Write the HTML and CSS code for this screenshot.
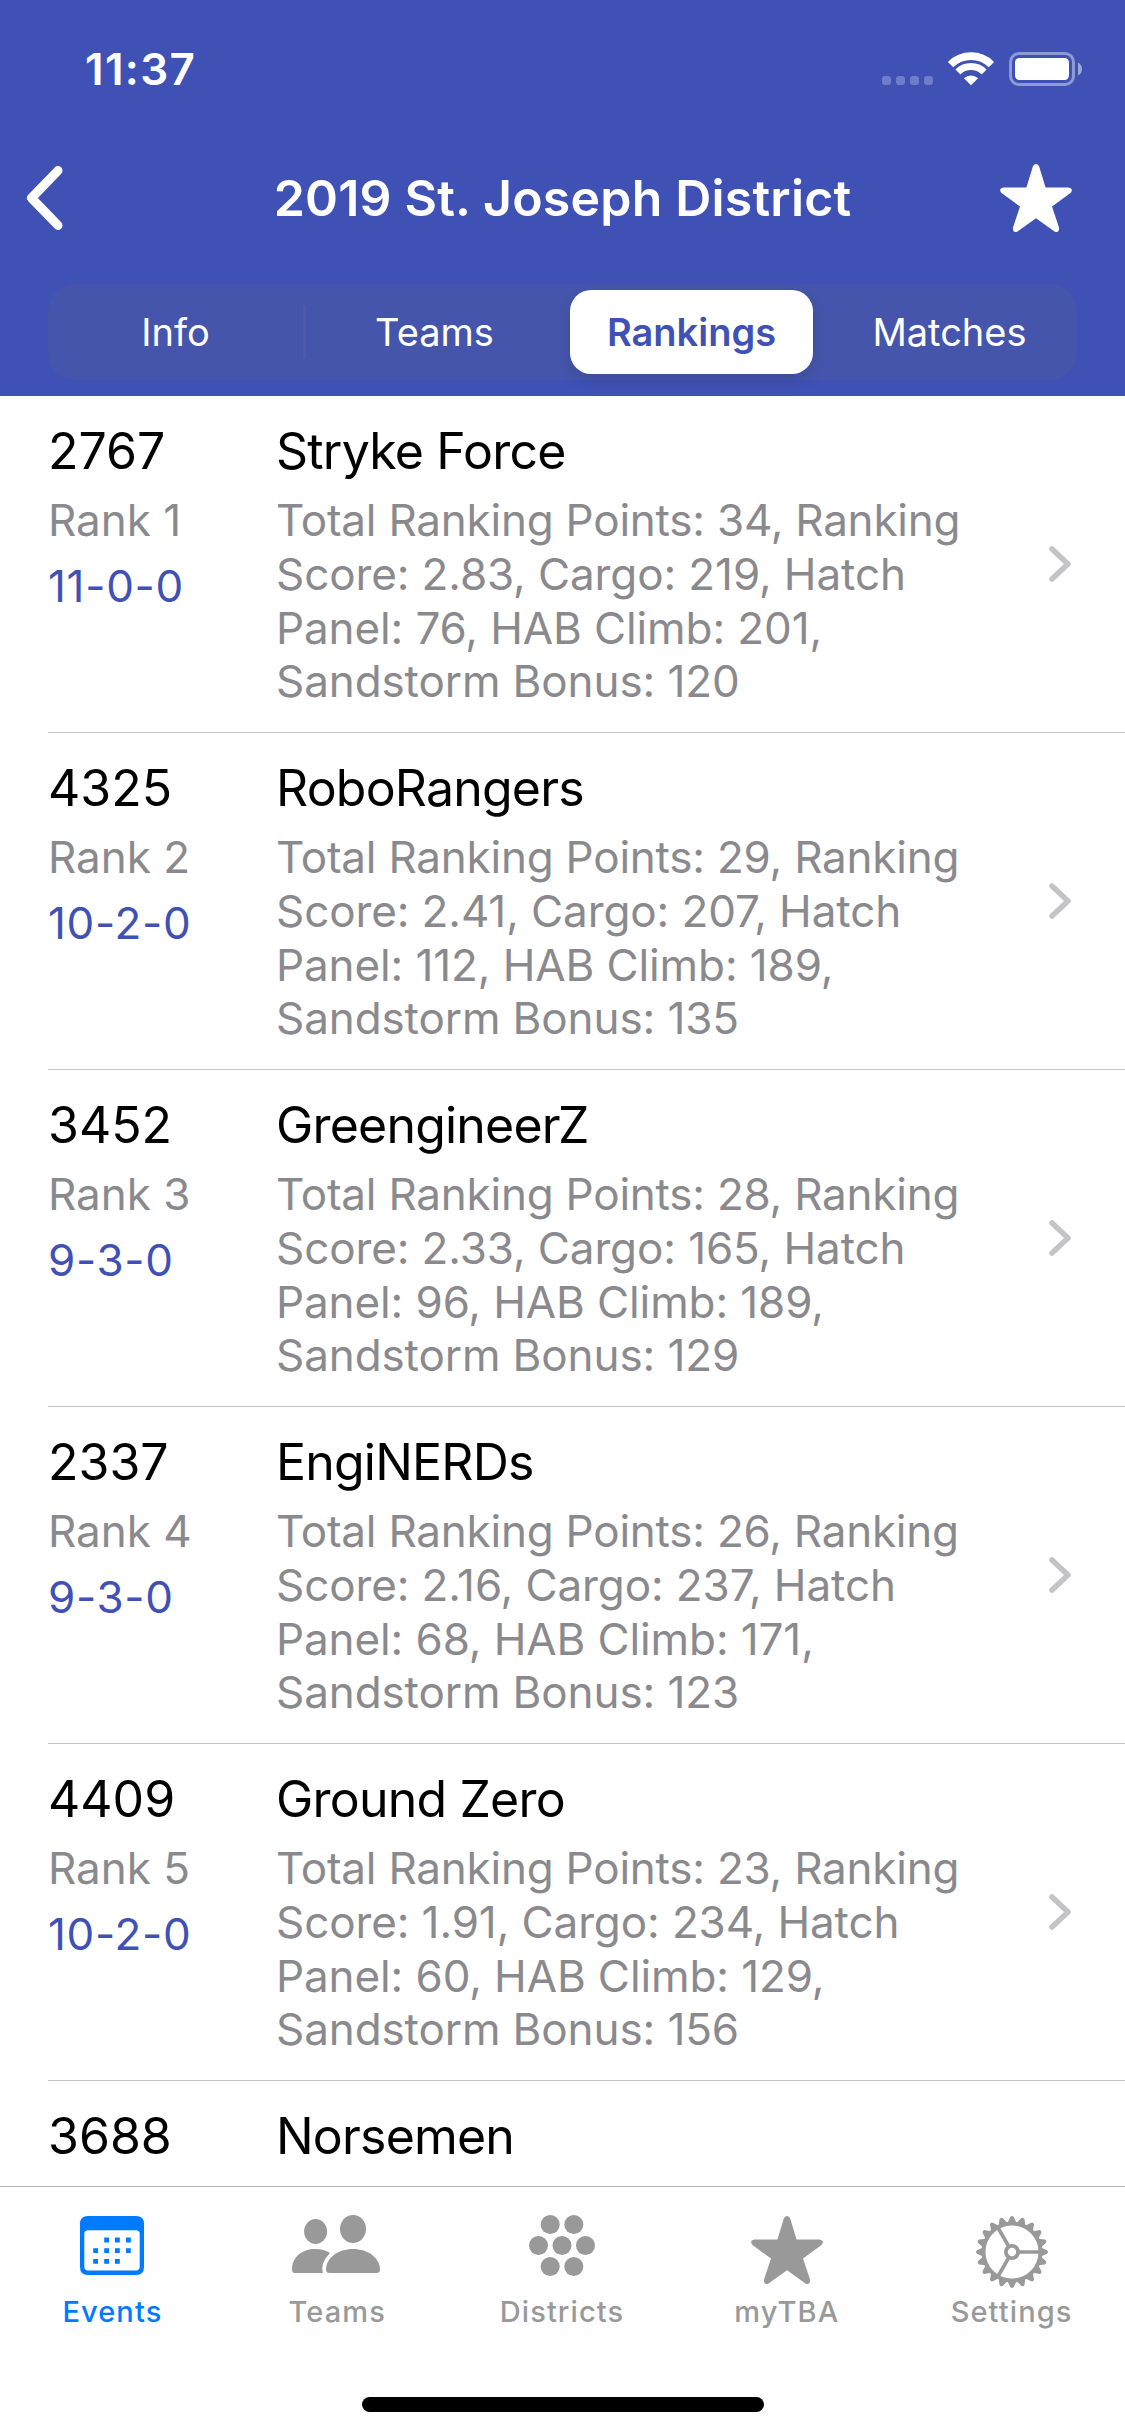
FILE: index.html
```
<!DOCTYPE html>
<html lang="en">
<head>
<meta charset="utf-8">
<title>2019 St. Joseph District</title>
<link rel="stylesheet" href="styles.css">
</head>
<body>
<div class="app">
  <header class="header">
    <div class="status">
      <span class="time">11:37</span>
      <svg class="status-icons" width="204" height="40" viewBox="880 50 204 40" aria-hidden="true">
        <g fill="#fff" fill-opacity=".25">
          <rect x="882" y="76" width="9" height="9" rx="3"/><rect x="896" y="76" width="9" height="9" rx="3"/><rect x="910" y="76" width="9" height="9" rx="3"/><rect x="924" y="76" width="9" height="9" rx="3"/>
        </g>
        <g fill="none" stroke="#fff">
          <path stroke-width="7.6" d="M950.6 64.6A28.9 28.9 0 0 1 991.4 64.6"/>
          <path stroke-width="7" d="M957.9 71.9A18.6 18.6 0 0 1 984.1 71.9"/>
        </g>
        <path fill="#fff" d="M971 85.2L963.9 78.3A10.2 10.2 0 0 1 978.1 78.3Z"/>
        <rect x="1010.5" y="53.5" width="63" height="31" rx="8.5" fill="none" stroke="#fff" stroke-opacity=".42" stroke-width="3"/>
        <rect x="1015" y="58" width="54" height="22" rx="4.5" fill="#fff"/>
        <path fill="#fff" fill-opacity=".5" d="M1078 62.5Q1082 64.500 1082 69T1078 75.500Z"/>
      </svg>
    </div>
    <div class="navbar">
      <svg class="back" width="37" height="64" viewBox="0 0 37 64" aria-hidden="true"><path d="M32 4.600L5.500 32L32 59.400" fill="none" stroke="#fff" stroke-width="9" stroke-linecap="round" stroke-linejoin="round"/></svg>
      <h1 class="title">2019 St. Joseph District</h1>
      <svg class="favorite" width="72" height="68" viewBox="0 0 72 68" aria-hidden="true"><path id="star" fill="currentColor" d="M33 2Q36-2 39 2L45.600 23.500H68.500Q74 24.800 70.500 29L52 42.500L59 63.500Q59.500 69.500 54.500 67.500L36 54.300L17.500 67.500Q12.500 69.500 13 63.500L20 42.500L1.500 29Q-2 24.800 3.500 23.500H26.400Z"/></svg>
    </div>
    <nav class="segments">
      <span class="segment divided">Info</span>
      <span class="segment">Teams</span>
      <span class="segment selected">Rankings</span>
      <span class="segment last">Matches</span>
    </nav>
  </header>

  <main class="list">
    <article class="row">
      <div class="team"><div class="number">2767</div><div class="rank">Rank 1</div><div class="record">11-0-0</div></div>
      <div class="info"><div class="name">Stryke Force</div><p class="detail">Total Ranking Points: 34, Ranking<br>Score: 2.83, Cargo: 219, Hatch<br>Panel: 76, HAB Climb: 201,<br>Sandstorm Bonus: 120</p></div>
      <svg class="chevron" width="24" height="38" viewBox="0 0 24 38" aria-hidden="true"><path id="disclosure" d="M4 4L20 19L4 34" fill="none" stroke="#c4c4c7" stroke-width="5.500" stroke-linecap="round" stroke-linejoin="round"/></svg>
    </article>
    <article class="row">
      <div class="team"><div class="number">4325</div><div class="rank">Rank 2</div><div class="record">10-2-0</div></div>
      <div class="info"><div class="name">RoboRangers</div><p class="detail">Total Ranking Points: 29, Ranking<br>Score: 2.41, Cargo: 207, Hatch<br>Panel: 112, HAB Climb: 189,<br>Sandstorm Bonus: 135</p></div>
      <svg class="chevron" width="24" height="38" viewBox="0 0 24 38" aria-hidden="true"><use href="#disclosure"/></svg>
    </article>
    <article class="row">
      <div class="team"><div class="number">3452</div><div class="rank">Rank 3</div><div class="record">9-3-0</div></div>
      <div class="info"><div class="name">GreengineerZ</div><p class="detail">Total Ranking Points: 28, Ranking<br>Score: 2.33, Cargo: 165, Hatch<br>Panel: 96, HAB Climb: 189,<br>Sandstorm Bonus: 129</p></div>
      <svg class="chevron" width="24" height="38" viewBox="0 0 24 38" aria-hidden="true"><use href="#disclosure"/></svg>
    </article>
    <article class="row">
      <div class="team"><div class="number">2337</div><div class="rank">Rank 4</div><div class="record">9-3-0</div></div>
      <div class="info"><div class="name">EngiNERDs</div><p class="detail">Total Ranking Points: 26, Ranking<br>Score: 2.16, Cargo: 237, Hatch<br>Panel: 68, HAB Climb: 171,<br>Sandstorm Bonus: 123</p></div>
      <svg class="chevron" width="24" height="38" viewBox="0 0 24 38" aria-hidden="true"><use href="#disclosure"/></svg>
    </article>
    <article class="row">
      <div class="team"><div class="number">4409</div><div class="rank">Rank 5</div><div class="record">10-2-0</div></div>
      <div class="info"><div class="name">Ground Zero</div><p class="detail">Total Ranking Points: 23, Ranking<br>Score: 1.91, Cargo: 234, Hatch<br>Panel: 60, HAB Climb: 129,<br>Sandstorm Bonus: 156</p></div>
      <svg class="chevron" width="24" height="38" viewBox="0 0 24 38" aria-hidden="true"><use href="#disclosure"/></svg>
    </article>
    <article class="row">
      <div class="team"><div class="number">3688</div></div>
      <div class="info"><div class="name">Norsemen</div></div>
    </article>
  </main>

  <footer class="footer">
    <nav class="tabs">
      <div class="tab active">
        <svg class="tab-icon" width="90" height="74" viewBox="67 2215 90 74" aria-hidden="true">
          <path fill="currentColor" fill-rule="evenodd" d="M88 2216H136Q144 2216 144 2224V2267Q144 2275 136 2275H88Q80 2275 80 2267V2224Q80 2216 88 2216ZM88 2230.300Q84.300 2230.300 84.300 2234V2266.500Q84.300 2270.500 88 2270.500H136Q139.700 2270.500 139.700 2266.500V2234Q139.700 2230.300 136 2230.300Z"/>
          <path stroke="currentColor" stroke-width="4.800" d="M104.200 2240h4.800M115 2240h4.800M126 2240h4.800M93.200 2250.600h4.800M104.200 2250.600h4.800M115 2250.600h4.800M126 2250.600h4.800M93.200 2261.300h4.800M104.200 2261.300h4.800M115 2261.300h4.800"/>
        </svg>
        <span>Events</span>
      </div>
      <div class="tab">
        <svg class="tab-icon" width="90" height="74" viewBox="292 2215 90 74" aria-hidden="true">
          <g fill="currentColor">
            <ellipse cx="315.600" cy="2231.500" rx="11.500" ry="12.500"/>
            <ellipse cx="353" cy="2229" rx="13" ry="14"/>
            <path d="M295 2273Q292 2273 292 2269.500C292 2257 302 2249 315.500 2249Q324 2249 330 2253Q320 2263 322.800 2273Z"/>
            <path d="M330 2273Q326 2273 326 2269.500C326 2258 338 2249 353 2249S380 2258 380 2269.500Q380 2273 376.500 2273Z"/>
          </g>
        </svg>
        <span>Teams</span>
      </div>
      <div class="tab">
        <svg class="tab-icon" width="90" height="74" viewBox="517 2215 90 74" aria-hidden="true">
          <g fill="currentColor">
            <circle cx="550.200" cy="2224.500" r="9.500"/><circle cx="573.800" cy="2224.500" r="9.500"/>
            <circle cx="538.500" cy="2245.500" r="9.500"/><circle cx="562" cy="2245.500" r="9.500"/><circle cx="585.500" cy="2245.500" r="9.500"/>
            <circle cx="550.200" cy="2266.500" r="9.500"/><circle cx="573.800" cy="2266.500" r="9.500"/>
          </g>
        </svg>
        <span>Districts</span>
      </div>
      <div class="tab">
        <svg class="tab-icon" width="90" height="74" viewBox="-9 -1 90 74" aria-hidden="true"><use href="#star"/></svg>
        <span>myTBA</span>
      </div>
      <div class="tab">
        <svg class="tab-icon" width="90" height="74" viewBox="-45 -37 90 74" aria-hidden="true">
          <defs>
            <path id="teeth" d="M29.500-4.300L35-1.800Q37 0 35 1.800L29.500 4.300ZM-29.500-4.300L-35-1.800Q-37 0-35 1.800L-29.500 4.300ZM-4.300 29.500L-1.800 35Q0 37 1.800 35L4.300 29.500ZM-4.300-29.500L-1.800-35Q0-37 1.800-35L4.300-29.500Z"/>
          </defs>
          <!-- Four teeth per group; the wheel's first tooth sits on the horizontal spoke -->
          <g fill="currentColor" transform="rotate(9)">
            <use href="#teeth" transform="rotate(9)"/><use href="#teeth" transform="rotate(27)"/><use href="#teeth" transform="rotate(45)"/><use href="#teeth" transform="rotate(63)"/><use href="#teeth" transform="rotate(81)"/>
          </g>
          <g fill="none" stroke="currentColor" stroke-width="3.600">
            <circle r="28.500" stroke-width="4"/>
            <circle r="6.100" stroke-width="3.800"/>
            <path d="M7 0H28M-3.500-6.060L-14-24.250M-3.500 6.060L-14 24.250"/>
          </g>
        </svg>
        <span>Settings</span>
      </div>
    </nav>
    <div class="home-indicator"></div>
  </footer>
</div>
</body>
</html>
```
FILE: styles.css
```
* {
  box-sizing: border-box;
}

body {
  margin: 0;
  background: #fff;
  font-family: Inter, "Liberation Sans", sans-serif;
}

.app {
  display: flex;
  flex-direction: column;
  width: 1125px;
  height: 2436px;
  overflow: hidden;
}

.header {
  flex: none;
  height: 396px;
  background: #3f51b5;
  color: #fff;
}

.status {
  display: flex;
  justify-content: space-between;
  height: 132px;
  padding: 42px 41px 0 85px;
}

.time {
  font-size: 44px;
  line-height: 54px;
  font-weight: 600;
  letter-spacing: 1.3px;
}

.status-icons {
  margin-top: 8px;
}

.navbar {
  display: grid;
  grid-template-columns: 1fr auto 1fr;
  align-items: center;
  height: 132px;
  padding: 0 53px 0 26px;
}

.title {
  margin: 0 0 0 27px;
  font-size: 50px;
  line-height: 60px;
  font-weight: 580;
  letter-spacing: .2px;
  white-space: nowrap;
}

.favorite {
  justify-self: end;
}

.segments {
  display: grid;
  grid-template-columns: 258px 257px 257px 257px;
  height: 96px;
  margin: 20px 48px 0;
  padding: 6px 0;
  border-radius: 27px;
  background: #4555ab;
}

.segment {
  display: flex;
  align-items: center;
  justify-content: center;
  font-size: 38px;
  font-weight: 430;
}

.divided {
  padding-right: 3px;
  background: linear-gradient(#4f5ba9, #4f5ba9) right center / 3px 54px no-repeat;
}

.selected {
  margin: 0 7px;
  border-radius: 21px;
  background: #fff;
  color: #3f51b5;
  font-weight: 570;
  box-shadow: 0 6px 16px rgba(0, 0, 0, .12);
}

.last {
  padding-left: 2px;
}

.list {
  flex: 1;
  min-height: 0;
  overflow: hidden;
}

.row {
  display: flex;
  height: 337px;
  margin-left: 48px;
  padding-top: 25px;
  border-bottom: 1px solid #c6c6c8;
}

.team {
  width: 228px;
}

.info {
  flex: 1;
}

.number,
.name {
  height: 60px;
  font-size: 50px;
  line-height: 60px;
  color: #000;
}

.name {
  letter-spacing: -.8px;
}

.rank,
.record,
.detail {
  margin: 0;
  font-size: 44px;
  line-height: 54px;
  color: #8a8a8e;
}

.rank,
.detail {
  margin-top: 13px;
  line-height: 53.8px;
}

.detail {
  letter-spacing: -.1px;
}

.detail::first-line {
  letter-spacing: -.22px;
}

.record {
  margin-top: 11px;
  color: #3f51b5;
  letter-spacing: .7px;
}

.chevron {
  margin: 124px 53px 0 0;
}

.footer {
  flex: none;
  height: 250px;
  border-top: 1px solid #b2b2b2;
  background: #fefefe;
}

.tabs {
  display: flex;
  height: 210px;
  margin-right: 1px;
}

.tab {
  display: flex;
  flex: 1;
  flex-direction: column;
  align-items: center;
  padding-top: 28px;
  color: #999;
  font-size: 29px;
  line-height: 36px;
  font-weight: 500;
  letter-spacing: 1.1px;
}

.active {
  color: #007aff;
}

.tab-icon {
  margin-bottom: 5px;
}

.home-indicator {
  width: 402px;
  height: 15px;
  margin: 0 auto;
  border-radius: 8px;
  background: #000;
}
```
